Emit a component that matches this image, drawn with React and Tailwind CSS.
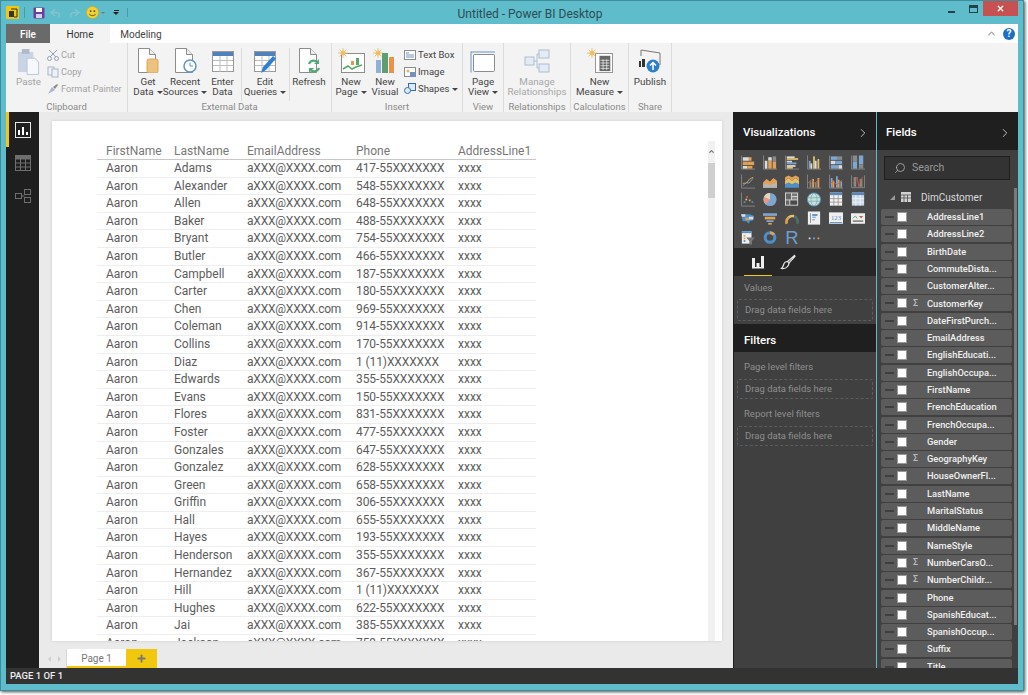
import { ChevronRight, ChevronUp, Plus, Search, X } from "lucide-react";

const lastNames = [
  ["Adams", "417-55XXXXXXX"],
  ["Alexander", "548-55XXXXXXX"],
  ["Allen", "648-55XXXXXXX"],
  ["Baker", "488-55XXXXXXX"],
  ["Bryant", "754-55XXXXXXX"],
  ["Butler", "466-55XXXXXXX"],
  ["Campbell", "187-55XXXXXXX"],
  ["Carter", "180-55XXXXXXX"],
  ["Chen", "969-55XXXXXXX"],
  ["Coleman", "914-55XXXXXXX"],
  ["Collins", "170-55XXXXXXX"],
  ["Diaz", "1 (11)XXXXXXX"],
  ["Edwards", "355-55XXXXXXX"],
  ["Evans", "150-55XXXXXXX"],
  ["Flores", "831-55XXXXXXX"],
  ["Foster", "477-55XXXXXXX"],
  ["Gonzales", "647-55XXXXXXX"],
  ["Gonzalez", "628-55XXXXXXX"],
  ["Green", "658-55XXXXXXX"],
  ["Griffin", "306-55XXXXXXX"],
  ["Hall", "655-55XXXXXXX"],
  ["Hayes", "193-55XXXXXXX"],
  ["Henderson", "355-55XXXXXXX"],
  ["Hernandez", "367-55XXXXXXX"],
  ["Hill", "1 (11)XXXXXXX"],
  ["Hughes", "622-55XXXXXXX"],
  ["Jai", "385-55XXXXXXX"],
  ["Jackson", "759-55XXXXXXX"],
];

const fields = [
  ["AddressLine1"],
  ["AddressLine2"],
  ["BirthDate"],
  ["CommuteDista..."],
  ["CustomerAlter..."],
  ["CustomerKey", true],
  ["DateFirstPurch..."],
  ["EmailAddress"],
  ["EnglishEducati..."],
  ["EnglishOccupa..."],
  ["FirstName"],
  ["FrenchEducation"],
  ["FrenchOccupa..."],
  ["Gender"],
  ["GeographyKey", true],
  ["HouseOwnerFl..."],
  ["LastName"],
  ["MaritalStatus"],
  ["MiddleName"],
  ["NameStyle"],
  ["NumberCarsO...", true],
  ["NumberChildr...", true],
  ["Phone"],
  ["SpanishEducat..."],
  ["SpanishOccup..."],
  ["Suffix"],
  ["Title"],
];

const O = "#e0a156";
const B = "#7fa6cf";
const Y = "#e3c26e";
const W = "#dcdcdc";
const G = "#8a8a8a";
const T = "#4f8fc8";
const R = "#c9634a";

function bars(list) {
  return list.map(([x, y, w, h, c], i) => <rect key={i} x={x} y={y} width={w} height={h} fill={c} />);
}

const Axis = () => <path d="M.5 0v15.500H16" stroke={G} fill="none" />;

// small chart glyphs for the visualization gallery, all on a 16x16 box
const vizIcons = [
  <g key="1">
    <Axis />
    {bars([[2, 2, 7, 4, W], [9, 2, 3, 4, O], [2, 7, 5, 4, O], [7, 7, 8, 4, O], [2, 12, 5, 3, W], [7, 12, 6, 3, O]])}
  </g>,
  <g key="2">
    <Axis />
    {bars([[2, 6, 3, 9, W], [6, 2, 4, 4, W], [6, 6, 4, 9, O], [11, 1, 4, 6, G], [11, 7, 4, 8, O]])}
  </g>,
  <g key="3">
    <Axis />
    {bars([[2, 1, 9, 2, W], [2, 3, 13, 2, Y], [2, 6, 6, 2, W], [2, 8, 11, 2, B], [2, 11, 10, 2, W], [2, 13, 7, 2, Y]])}
  </g>,
  <g key="4">
    <Axis />
    {bars([[2, 6, 2, 9, B], [4, 9, 2, 6, W], [7, 1, 2, 14, Y], [9, 6, 2, 9, W], [12, 4, 2, 11, Y]])}
  </g>,
  <g key="5">
    <Axis />
    {bars([[2, 1, 8, 4, B], [10, 1, 5, 4, G], [2, 6, 5, 4, W], [7, 6, 8, 4, B], [2, 11, 9, 4, B], [11, 11, 4, 4, W]])}
  </g>,
  <g key="6">
    <Axis />
    {bars([[2, 0, 5, 7, G], [2, 7, 5, 8, B], [9, 0, 5, 10, B], [9, 10, 5, 5, G]])}
  </g>,
  <g key="l">
    <Axis />
    <path d="M2 13l4-4 3 1 5-6" stroke={B} fill="none" />
    <path d="M2 10l4 0 4-5 4-2" stroke={O} fill="none" />
  </g>,
  <g key="a">
    <path d="M0 15V9l4-4 4 3 4-4 4 3v8z" fill={O} />
    <path d="M0 15v-3l4-2 4 2 8-3v6z" fill="#b5b5b5" />
  </g>,
  <g key="s">
    <path d="M0 15v-4l4-2 4 2 4-2 4 2v4z" fill={T} />
    <path d="M0 11V7l4-3 4 3 4-3 4 3v4l-4-2-4 2-4-2z" fill={Y} />
    <path d="M0 7V3l4-2 4 2 4-2 4 2v4l-4-3-4 3-4-3z" fill={O} />
  </g>,
  <g key="c1">
    <Axis />
    {bars([[3, 8, 2, 7, G], [6, 5, 2, 10, O], [9, 9, 2, 6, G], [12, 4, 2, 11, O]])}
    <path d="M1 10l4-4 4 4 6-6" stroke={R} fill="none" />
  </g>,
  <g key="c2">
    <Axis />
    {bars([[2, 4, 2, 11, B], [4, 7, 2, 8, O], [8, 2, 2, 13, B], [10, 6, 2, 9, O], [13, 8, 2, 7, B]])}
    <path d="M1 10l4-2 4 4 6-6" stroke={R} fill="none" />
  </g>,
  <g key="c3">
    <path d="M.5 1v14h15V1" stroke={G} fill="none" />
    <rect x="3" y="3" width="3" height="11" fill={G} />
    <rect x="10" y="5" width="3" height="9" fill={G} />
    <path d="M3 10l4-7 2 11 4-11" stroke={R} fill="none" />
  </g>,
  <g key="sc">
    <Axis />
    {bars([[3, 10, 2, 2, T], [6, 4, 2, 2, R], [9, 8, 2, 2, O], [12, 10, 2, 2, T], [5, 7, 2, 2, Y]])}
  </g>,
  <g key="p">
    <circle cx="8" cy="8" r="7.500" fill={B} />
    <path d="M8 8V.5a7.500 7.500 0 0 0-7 5z" fill="#e7d6b4" />
    <path d="M8 8L1 5.500a7.500 7.500 0 0 0 2 8z" fill="#e59a86" />
  </g>,
  <g key="tm">
    <rect width="15" height="15" fill={W} />
    {bars([[1, 1, 6, 7, "#666"], [8, 1, 6, 3, "#777"], [8, 5, 6, 3, "#888"], [1, 9, 4, 5, "#666"], [6, 9, 8, 5, "#4a4a4a"]])}
  </g>,
  <g key="g">
    <circle cx="8" cy="8" r="7.500" fill="#c6dfe6" stroke={T} />
    <path d="M1 6h14M1 10h14" stroke="#86b59f" />
    <ellipse cx="8" cy="8" rx="3.500" ry="7" stroke="#86b59f" fill="none" />
  </g>,
  <g key="t">
    <rect x="1" width="14" height="15" fill="#f2f2f2" />
    <rect x="1" width="14" height="3" fill="#5a86ba" />
    <path d="M1 7h14M1 11h14M5.500 3v12M10.500 3v12" stroke="#9a9a9a" />
  </g>,
  <g key="m">
    <rect x="1" width="14" height="15" fill="#c9d9ea" />
    <rect x="1" width="14" height="3" fill="#5a86ba" />
    <path d="M1 7h14M1 11h14M5.500 3v12M10.500 3v12" stroke="#f2f2f2" />
  </g>,
  <g key="f">
    <path d="M0 3h10l5 2-1 5-4 1-1 3-3-3H2z" fill={T} />
    <path d="M0 3h5v3H1zM9 6h5v3H9z" fill={W} />
    <path d="M5 7h4v3H5z" fill={O} />
  </g>,
  bars([[0, 2, 16, 3, B], [2, 6, 12, 3, O], [4, 10, 8, 2, B], [6, 13, 4, 2, O]]),
  <g key="ga">
    <path d="M2 14a6.500 6.500 0 0 1 2-7" stroke={O} strokeWidth="3" fill="none" />
    <path d="M4 7a6.500 6.500 0 0 1 6.500-1.500" stroke={Y} strokeWidth="3" fill="none" />
    <path d="M10.500 5.500A6.500 6.500 0 0 1 14 14" stroke="#4f6f6f" strokeWidth="3" fill="none" />
  </g>,
  <g key="ca">
    <rect x="1" width="14" height="15" fill="#efefef" />
    <path d="M4 2v11" stroke={G} />
    {bars([[6, 3, 6, 2, T], [6, 6, 4, 1, T], [6, 9, 3, 1, T]])}
  </g>,
  <g key="12">
    <rect y="1" width="16" height="13" fill="#efefef" />
    <text x="8" y="10" textAnchor="middle" fontSize="7.500" fill={T} fontFamily="Liberation Serif, serif">123</text>
    <rect x="1" y="12" width="14" height="1" fill={T} />
  </g>,
  <g key="k">
    <rect y="2" width="16" height="12" fill="#efefef" />
    <path d="M2 8l3-3 2 3" fill="none" stroke="#5aa56a" />
    <path d="M9 5h5l-2.500 3z" fill={R} />
    <rect x="2" y="10" width="12" height="2" fill={G} />
  </g>,
  <g key="sl">
    <rect x="1" y="1" width="11" height="14" fill="#efefef" />
    <rect x="1" y="1" width="11" height="2" fill={T} />
    {bars([[3, 5, 2, 2, O], [3, 8, 2, 2, O], [3, 11, 2, 2, T]])}
    <path d="M6 8h10l-3.500 4v4h-3v-4z" fill="#777" />
  </g>,
  <g key="d">
    <circle cx="8" cy="8" r="5.500" fill="none" stroke={T} strokeWidth="3.500" />
    <path d="M8 2.500a5.500 5.500 0 0 1 4.500 2.300" stroke={O} strokeWidth="3.500" fill="none" />
  </g>,
  <text key="r" x="8" y="15.500" textAnchor="middle" fontSize="21" fill="#6e9fd0" fontFamily="Liberation Sans, sans-serif">R</text>,
  <g key="dots">
    <rect x="2" y="8" width="2" height="2" fill={W} />
    <rect x="7" y="8" width="2" height="2" fill={B} />
    <rect x="12" y="8" width="2" height="2" fill={O} />
  </g>,
];

function PaperIcon({ children }) {
  return (
    <svg viewBox="0 0 24 25" className="h-[25px] w-6">
      <path d="M2.500 .5h11l6 6v18h-17z" fill="#fff" stroke="#8c8c8c" />
      <path d="M13.500 .5v6h6" fill="#eee" stroke="#8c8c8c" />
      {children}
    </svg>
  );
}

function GridIcon({ pen }) {
  return (
    <svg viewBox="0 0 24 22" className="h-[22px] w-6">
      <rect x="1.500" y=".5" width="21" height="20" fill="#fff" stroke="#9a9a9a" />
      <rect x="2" y="1" width="20" height="4" fill="#4f81bd" />
      <path d="M2 9.500h20M2 14.500h20M9 5v16M16 5v16" stroke="#bdbdbd" />
      {pen && <path d="M8 22l2-6 10-11 3 2.500-10 11.500z" fill="#2f7fd1" />}
    </svg>
  );
}

const Caret = () => <span className="ml-[3px] inline-block h-0 w-0 border-x-[3px] border-t-[3px] border-x-transparent border-t-[#444] align-middle" />;

// one large ribbon button: icon above, one or two lines of label
function BigButton({ icon, lines, caret, w, dim }) {
  return (
    <div className={`flex shrink-0 flex-col items-center ${w}`}>
      <div className="flex h-[25px] items-end justify-center">{icon}</div>
      <div className={`mt-[4px] whitespace-nowrap text-center text-[9.800px] leading-[10px] ${dim ? "text-[#a8a8a8]" : "text-[#444]"}`}>
        {lines.map((l, i) => (
          <div key={l}>
            {l}
            {caret && i === lines.length - 1 && <Caret />}
          </div>
        ))}
      </div>
    </div>
  );
}

function RibbonGroup({ label, w, children }) {
  return (
    <div className={`flex h-full shrink-0 flex-col border-r border-[#dcdcdc] ${w}`}>
      <div className="flex min-h-0 flex-1 pt-[5px]">{children}</div>
      <div className="-mb-[1px] text-center text-[9.500px] leading-[12px] text-[#8a8a8a]">{label}</div>
    </div>
  );
}

const Sun = () => (
  <svg viewBox="0 0 10 10" className="absolute left-0 top-0 h-[10px] w-[10px]">
    <circle cx="5" cy="5" r="2.500" fill="#f3c677" />
    <path d="M5 0v10M0 5h10M1.500 1.500l7 7M8.500 1.500l-7 7" stroke="#f0b95c" strokeWidth=".8" />
  </svg>
);

const smallRow = "flex h-[17px] items-center gap-[2px] whitespace-nowrap";

function Ribbon() {
  return (
    <div className="flex h-[69px] shrink-0 bg-[#f3f3f3]">
      <RibbonGroup label="Clipboard" w="w-[122px]">
        <div className="flex pl-[11px]">
          <div className="flex w-[23px] flex-col items-center">
            <svg viewBox="0 0 24 27" className="mt-[1px] h-[26px] w-[23px] shrink-0">
              <rect x="1" y="3" width="16" height="21" fill="#c9d4e4" />
              <rect x="5" y="0" width="8" height="5" fill="#aeb9ca" />
              <path d="M10.500 9.500h8l4 4v13h-12z" fill="#f6f8fc" stroke="#b9c6da" />
            </svg>
            <div className="mt-[2px] text-[9.800px] leading-[10px] text-[#a3a3a3]">Paste</div>
          </div>
          <div className="-mt-[1.500px] ml-[7px] flex flex-col text-[9.200px] text-[#a3a3a3]">
            <div className={smallRow}>
              <svg viewBox="0 0 12 12" className="h-3 w-3" fill="none" stroke="#8fa0b8">
                <path d="M2 1l7 7M10 1L3 8" />
                <circle cx="2.500" cy="9.500" r="2" />
                <circle cx="9.500" cy="9.500" r="2" />
              </svg>
              Cut
            </div>
            <div className={smallRow}>
              <svg viewBox="0 0 12 12" className="h-3 w-3" fill="#eef1f6" stroke="#a9b6c9">
                <rect x="1" y="1" width="6" height="8" />
                <rect x="5" y="3" width="6" height="8" />
              </svg>
              Copy
            </div>
            <div className={smallRow}>
              <svg viewBox="0 0 12 12" className="h-3 w-3">
                <path d="M1 11l4-7 3 3z" fill="#a9b6c9" />
                <path d="M6 4l4-3 1 1-3 4z" fill="#8c8c8c" />
              </svg>
              Format Painter
            </div>
          </div>
        </div>
      </RibbonGroup>
      <RibbonGroup label="External Data" w="w-[204px]">
        <div className="flex pl-[2px]">
          <BigButton
            w="w-[36px]"
            lines={["Get", "Data"]}
            caret
            icon={
              <PaperIcon>
                <rect x="11" y="11" width="11" height="14" rx="2" fill="#edc27c" stroke="#d7a95c" />
              </PaperIcon>
            }
          />
          <BigButton
            w="w-[38px]"
            lines={["Recent", "Sources"]}
            caret
            icon={
              <PaperIcon>
                <circle cx="17" cy="18" r="6" fill="#fff" stroke="#5b93c9" strokeWidth="1.500" />
                <path d="M17 14.500V18h3" stroke="#5b93c9" fill="none" />
              </PaperIcon>
            }
          />
          <div className="w-[38px] border-r border-[#dcdcdc]">
            <BigButton w="w-[37px]" lines={["Enter", "Data"]} icon={<GridIcon />} />
          </div>
          <BigButton w="w-[46px]" lines={["Edit", "Queries"]} caret icon={<GridIcon pen />} />
          <div className="w-[2px] border-r border-[#dcdcdc]" />
          <BigButton
            w="w-[38px]"
            lines={["Refresh"]}
            icon={
              <PaperIcon>
                <path d="M12 16a5 5 0 0 1 9-1M22 20a5 5 0 0 1-9 1" fill="none" stroke="#55a678" strokeWidth="2.200" />
                <path d="M22 11v5h-5zM12 25v-5h5z" fill="#55a678" />
              </PaperIcon>
            }
          />
        </div>
      </RibbonGroup>
      <RibbonGroup label="Insert" w="w-[131px]">
        <div className="flex pl-[2px]">
          <BigButton
            w="w-[34px]"
            lines={["New", "Page"]}
            caret
            icon={
              <div className="relative h-[25px] w-[27px]">
                <svg viewBox="0 0 24 20" className="absolute bottom-0 right-0 h-[20px] w-6">
                  <rect x=".5" y=".5" width="23" height="19" fill="#fff" stroke="#8c8c8c" />
                  <rect x="10" y="8" width="3" height="4" fill="#e8934a" />
                  <rect x="15" y="5" width="3" height="7" fill="#5aa56a" />
                  <path d="M2 16l5-3 4 3 4-2 6-2" fill="none" stroke="#5aa56a" strokeWidth="1.500" />
                </svg>
                <Sun />
              </div>
            }
          />
          <BigButton
            w="w-[34px]"
            lines={["New", "Visual"]}
            icon={
              <div className="relative h-[25px] w-[24px]">
                <div className="absolute bottom-0 left-[3px] flex items-end gap-[1px]">
                  <div className="h-[13px] w-[5px] bg-[#8fb0d4]" />
                  <div className="h-[20px] w-[6px] bg-[#5d9e73]" />
                  <div className="h-[16px] w-[5px] bg-[#e8934a]" />
                </div>
                <Sun />
              </div>
            }
          />
          <div className="-mt-[1.500px] ml-[2px] flex flex-col text-[9.500px] text-[#444]">
            <div className={smallRow}>
              <svg viewBox="0 0 12 12" className="h-3 w-3">
                <rect x=".5" y="1.500" width="11" height="9" fill="#fff" stroke="#8c8c8c" />
                <path d="M2 4h3M2 6h8M2 8h8" stroke="#6c93c4" />
              </svg>
              Text Box
            </div>
            <div className={smallRow}>
              <svg viewBox="0 0 12 12" className="h-3 w-3">
                <rect x=".5" y="1.500" width="11" height="9" fill="#fff" stroke="#8c8c8c" />
                <circle cx="4" cy="5" r="1.500" fill="#e8b35c" />
                <rect x="6" y="6" width="5" height="5" fill="#6c93c4" />
              </svg>
              Image
            </div>
            <div className={smallRow}>
              <svg viewBox="0 0 12 12" className="h-3 w-3" fill="#dfeaf6" stroke="#2f6fb0">
                <rect x="4.500" y=".5" width="7" height="7" />
                <circle cx="3.500" cy="7.500" r="3" />
              </svg>
              <span>
                Shapes
                <Caret />
              </span>
            </div>
          </div>
        </div>
      </RibbonGroup>
      <RibbonGroup label="View" w="w-[41px]">
        <BigButton
          w="w-[40px]"
          lines={["Page", "View"]}
          caret
          icon={
            <svg viewBox="0 0 26 22" className="h-[22px] w-[26px]">
              <path d="M1 .5v21M1 1h24" stroke="#6c93c4" fill="none" />
              <rect x="3.500" y="3.500" width="21" height="17" rx="1" fill="#fff" stroke="#8c8c8c" />
            </svg>
          }
        />
      </RibbonGroup>
      <RibbonGroup label="Relationships" w="w-[67px]">
        <BigButton
          w="w-[66px]"
          dim
          lines={["Manage", "Relationships"]}
          icon={
            <svg viewBox="0 0 26 24" className="h-6 w-[26px]" fill="#e4ebf4" stroke="#aebed3">
              <rect x="1" y="8" width="9" height="8" />
              <rect x="15" y="1" width="10" height="8" />
              <rect x="15" y="15" width="10" height="8" />
              <path d="M10 12h3M13 5v14M13 5h2M13 19h2" fill="none" />
            </svg>
          }
        />
      </RibbonGroup>
      <RibbonGroup label="Calculations" w="w-[58px]">
        <BigButton
          w="w-[57px]"
          lines={["New", "Measure"]}
          caret
          icon={
            <div className="relative h-[25px] w-[26px]">
              <svg viewBox="0 0 20 22" className="absolute bottom-0 right-0 h-[20px] w-[18px]">
                <rect x=".5" y=".5" width="19" height="21" fill="#fff" stroke="#8c8c8c" />
                <rect x="5" y="3" width="12" height="17" fill="#666" />
                <path d="M6 8h10M6 11h10M6 14h10M6 17h10M9 7v12M13 7v12" stroke="#fff" strokeWidth=".7" />
              </svg>
              <Sun />
            </div>
          }
        />
      </RibbonGroup>
      <RibbonGroup label="Share" w="w-[43px]">
        <BigButton
          w="w-[42px]"
          lines={["Publish"]}
          icon={
            <svg viewBox="0 0 24 24" className="h-6 w-6">
              <path d="M3 7V1l19 3v12" fill="none" stroke="#777" />
              <rect x="1" y="12" width="2" height="6" fill="#333" />
              <rect x="4" y="10" width="3" height="8" fill="#333" />
              <circle cx="15" cy="17" r="6.500" fill="#2f7fc8" />
              <path d="M15 21v-7M12 16.500l3-3 3 3" stroke="#fff" strokeWidth="1.500" fill="none" />
            </svg>
          }
        />
      </RibbonGroup>
    </div>
  );
}

function TitleBar() {
  return (
    <div className="flex h-[23px] shrink-0 items-center">
      <div className="flex h-[13px] w-[13px] items-center justify-center rounded-[1px] bg-[#f2c80f]">
        <svg viewBox="0 0 10 10" className="h-[10px] w-[10px]">
          <rect x="1" y="3" width="5" height="6" fill="#333" />
          <path d="M3 1h6v8H6" fill="none" stroke="#333" />
        </svg>
      </div>
      <div className="mx-[5px] h-[11px] w-px bg-[#4b9aa8]" />
      <svg viewBox="0 0 12 12" className="ml-[3px] h-[12px] w-[12px]">
        <rect x=".5" y=".5" width="11" height="11" rx="1" fill="#6b3fa0" />
        <rect x="3" y="1" width="6" height="4" fill="#fff" />
        <rect x="3" y="7" width="6" height="4" fill="#d8d0e8" />
      </svg>
      <svg viewBox="0 0 30 12" className="ml-[5px] h-3 w-[30px]" fill="none" stroke="#84c3cf" strokeWidth="1.500">
        <path d="M5 2L1 5.500 5 9M1 5.500h5c3 0 4 2 3 5" />
        <path d="M25 2l4 3.500L25 9M29 5.500h-5c-3 0-4 2-3 5" />
      </svg>
      <svg viewBox="0 0 14 14" className="ml-[6px] h-[13px] w-[13px]">
        <circle cx="7" cy="7" r="6.500" fill="#f5d130" stroke="#d4a80f" strokeWidth=".6" />
        <circle cx="5" cy="5.500" r="1" fill="#444" />
        <circle cx="9" cy="5.500" r="1" fill="#444" />
        <path d="M3.500 8.500c1.500 2.500 5.500 2.500 7 0" stroke="#444" fill="none" />
      </svg>
      <span className="ml-[2px] h-0 w-0 border-x-[2px] border-t-[2px] border-x-transparent border-t-[#777]" />
      <div className="ml-[8px] flex flex-col items-center gap-[1px]">
        <div className="h-px w-[5px] bg-[#222]" />
        <div className="h-0 w-0 border-x-[3px] border-t-[3px] border-x-transparent border-t-[#222]" />
      </div>
      <div className="ml-[8px] h-[9px] w-px bg-[#4b9aa8]" />
      <div className="flex-1 pr-[16px] pt-[2px] text-center text-[12px] text-[#2b4c52]">Untitled - Power BI Desktop</div>
      <div className="flex h-[15px] items-start self-start">
        <div className="mr-[14px] mt-[10px] h-[2px] w-[7px] bg-[#26404a]" />
        <div className="mr-[5px] mt-[4px] h-[8px] w-[9px] border border-t-[3px] border-[#26404a]" />
        <div className="flex h-[15px] w-[35px] items-center justify-center bg-[#c75050]">
          <X className="h-[9px] w-[9px] text-white" strokeWidth={3.500} />
        </div>
      </div>
    </div>
  );
}

function Tabs() {
  return (
    <div className="flex h-[19px] shrink-0 items-stretch bg-white text-[10px] leading-[21px]">
      <div className="w-[44px] bg-[#6a6a6a] text-center font-medium text-white">File</div>
      <div className="w-[60px] bg-[#f3f3f3] text-center text-[#333]">Home</div>
      <div className="w-[62px] text-center text-[#444]">Modeling</div>
      <div className="flex flex-1 items-center justify-end gap-[6px] pr-[3px]">
        <ChevronUp className="h-[11px] w-[11px] text-[#a8a8a8]" strokeWidth={3} />
        <div className="flex h-[12px] w-[12px] items-center justify-center rounded-full bg-[#1c6fc9] text-[10px] font-bold leading-none text-white">?</div>
      </div>
    </div>
  );
}

function LeftNav() {
  return (
    <div className="flex w-[33px] shrink-0 flex-col items-center bg-[#1f1f1f]">
      <div className="flex h-[35px] w-full items-center justify-center border-l-[3px] border-[#f2c80f] pr-[3px] pt-[1px]">
        <svg viewBox="0 0 16 16" className="h-4 w-4" fill="none">
          <rect x=".5" y=".5" width="15" height="15" stroke="#e8e8e8" />
          <path d="M4 13V8M8 13V5M12 13v-3" stroke="#fff" strokeWidth="2" />
        </svg>
      </div>
      <svg viewBox="0 0 16 16" className="mt-[8px] h-4 w-4" fill="none" stroke="#6e6e6e">
        <rect x=".5" y=".5" width="15" height="15" />
        <rect x="1" y="1" width="14" height="3" fill="#6e6e6e" />
        <path d="M1 8h14M1 12h14M5.500 4v12M10.500 4v12" />
      </svg>
      <svg viewBox="0 0 16 16" className="mt-[17px] h-4 w-4" fill="none" stroke="#6e6e6e">
        <rect x=".5" y="5.500" width="6" height="5" />
        <rect x="9.500" y="1.500" width="6" height="5" />
        <rect x="9.500" y="9.500" width="6" height="5" />
        <path d="M6.500 8h3" />
      </svg>
    </div>
  );
}

const tableCols = "grid grid-cols-[77px_73px_109px_102px_78px] items-center";

function Canvas() {
  return (
    <div className="flex w-[694px] shrink-0 flex-col bg-[#eaeaea]">
      <div className="flex min-h-0 flex-1 pb-[8px] pl-[13px] pr-[11px] pt-[9px]">
        <div className="flex min-w-0 flex-1 overflow-hidden bg-white pl-[45px] pr-[7px] pt-[21px] shadow-[0_0_3px_rgba(0,0,0,0.12)]">
          <div className="w-[439px] shrink-0 text-[12px] text-[#5c5c5c]">
            <div className={`${tableCols} h-[18px] border-b border-[#c8c8c8] leading-[18px] text-[#777]`}>
              <div className="pl-[9px]">FirstName</div>
              <div>LastName</div>
              <div>EmailAddress</div>
              <div>Phone</div>
              <div>AddressLine1</div>
            </div>
            {lastNames.map(([last, phone]) => (
              <div key={last} className={`${tableCols} h-[17.600px] border-b border-[#eeeeee] leading-[17px]`}>
                <div className="pl-[9px]">Aaron</div>
                <div>{last}</div>
                <div className="tracking-[-0.2px]">aXXX@XXXX.com</div>
                <div className="tracking-[-0.1px]">{phone}</div>
                <div>xxxx</div>
              </div>
            ))}
          </div>
          <div className="-mt-[1px] ml-auto flex w-[7px] shrink-0 flex-col items-center bg-[#f1f1f1] pt-[7px]">
            <ChevronUp className="h-[7px] w-[7px] shrink-0 text-[#777]" strokeWidth={4} />
            <div className="mt-[8px] h-[35px] w-[7px] shrink-0 bg-[#cfcfcf]" />
          </div>
        </div>
      </div>
      <div className="flex h-[19px] shrink-0 items-stretch text-[10px]">
        <div className="flex w-[28px] items-center justify-center gap-[7px] border-r border-[#d8d8d8] pl-[3px]">
          <span className="h-0 w-0 border-y-[3px] border-r-[3px] border-y-transparent border-r-[#cfcfcf]" />
          <span className="h-0 w-0 border-y-[3px] border-l-[3px] border-y-transparent border-l-[#cfcfcf]" />
        </div>
        <div className="w-[59px] border-b-2 border-[#f2c80f] bg-white text-center leading-[19px] text-[#777]">Page 1</div>
        <div className="flex w-[31px] items-center justify-center bg-[#f2c80f]">
          <Plus className="h-[11px] w-[11px] text-[#777]" strokeWidth={4} />
        </div>
      </div>
    </div>
  );
}

function PanelHeading({ children, chevron, h }) {
  return (
    <div className={`flex shrink-0 items-center justify-between bg-[#1f1f1f] pl-[9px] pr-[6px] text-[11.500px] font-medium text-white ${h}`}>
      {children}
      {chevron && <ChevronRight className="h-[14px] w-[14px] text-[#cfcfcf]" strokeWidth={1.500} />}
    </div>
  );
}

function DropWell({ className }) {
  return (
    <div className={`mx-[3px] flex items-center rounded-[2px] border border-dashed border-[#5c5c5c] pl-[7px] text-[9.500px] text-[#8f8f8f] ${className}`}>
      Drag data fields here
    </div>
  );
}

function Visualizations() {
  return (
    <div className="flex w-[142px] shrink-0 flex-col bg-[#404040]">
      <PanelHeading chevron h="h-[38px] pt-[3px]">Visualizations</PanelHeading>
      <div className="grid h-[98px] shrink-0 grid-cols-[repeat(6,14px)] content-start gap-x-[8px] gap-y-[3.700px] bg-[#4a4a4a] pl-[7px] pt-[5px]">
        {vizIcons.map((g, i) => (
          <svg key={i} viewBox="0 0 16 16" className="h-[15px] w-[14px]">
            {g}
          </svg>
        ))}
      </div>
      <div className="flex h-[28px] shrink-0 items-center bg-[#262626] pl-[10px]">
        <div className="flex h-full w-[28px] items-center justify-center border-b-[1.500px] border-[#f2c80f]">
          <svg viewBox="0 0 14 14" className="h-[14px] w-[14px]" fill="#f0f0f0">
            <rect x="1" y="3" width="3" height="9" />
            <rect x="5.500" y="8" width="3" height="4" />
            <rect x="10" y="1" width="3" height="11" />
            <rect x="1" y="12" width="12" height="1.500" />
          </svg>
        </div>
        <svg viewBox="0 0 16 16" className="ml-[8px] h-[16px] w-[16px]" fill="none" stroke="#e8e8e8" strokeWidth="1.200">
          <path d="M14.500 1.500l-7 6 1.500 1.500 6-6.500z" />
          <path d="M7.500 7.500C5 7.500 4 9 3.500 11 3 13 1.500 14.500 1.500 14.500s4 .5 6-2C9 11 9 9 9 9" />
        </svg>
      </div>
      <div className="pl-[10px] pt-[5px] text-[9.500px] leading-[13px] text-[#8f8f8f]">Values</div>
      <DropWell className="mt-[5px] h-[22px]" />
      <div className="mt-[3px]">
        <PanelHeading h="h-[28px] pt-[5px]">
          <span className="pl-px">Filters</span>
        </PanelHeading>
      </div>
      <div className="pl-[10px] pt-[8px] text-[9.500px] leading-[13px] text-[#8f8f8f]">Page level filters</div>
      <DropWell className="mt-[6px] h-[20px]" />
      <div className="pl-[10px] pt-[8px] text-[9.500px] leading-[13px] text-[#8f8f8f]">Report level filters</div>
      <DropWell className="mt-[6px] h-[20px]" />
    </div>
  );
}

function Fields() {
  return (
    <div className="ml-px flex w-[141px] shrink-0 flex-col bg-[#404040]">
      <PanelHeading chevron h="h-[38px] pt-[3px]">Fields</PanelHeading>
      <div className="relative min-h-0 flex-1 overflow-hidden pl-[4px]">
        <div className="ml-[3px] mt-[6px] flex h-[24px] w-[126px] items-center gap-[6px] border border-[#1f1f1f] bg-[#333] pl-[9px] text-[10.500px] text-[#999]">
          <Search className="h-[12px] w-[12px] -scale-x-100 text-[#bbb]" strokeWidth={1.500} />
          Search
        </div>
        <div className="flex h-[29px] items-center pl-[9px] pt-[5px] text-[10px] text-[#ddd]">
          <span className="h-0 w-0 border-b-[5px] border-l-[5px] border-b-[#999] border-l-transparent" />
          <svg viewBox="0 0 10 10" className="ml-[6px] h-[10px] w-[10px]" fill="#d0d0d0">
            <rect width="10" height="10" />
            <path d="M0 3h10M0 6h10M3 3v7M6.500 3v7" stroke="#404040" strokeWidth=".7" />
          </svg>
          <span className="ml-[10px]">DimCustomer</span>
        </div>
        <div className="flex w-[131px] flex-col gap-[1.300px]">
          {fields.map(([name, sum]) => (
            <div key={name} className="flex h-[16px] shrink-0 items-center rounded-[2px] bg-[#5c5c5c] pl-[4px] text-[9.300px] font-medium text-[#f0f0f0]">
              <div className="h-[2px] w-[9px] bg-[#3f3f3f]" />
              <div className="ml-[3px] h-[10px] w-[10px] border border-[#999] bg-white" />
              <div className="w-[20px] pl-[6px] text-[9px] text-[#bbb]">{sum ? "Σ" : ""}</div>
              <div className="whitespace-nowrap">{name}</div>
            </div>
          ))}
        </div>
        <div className="absolute right-[1px] top-[38px] h-[437px] w-[3px] bg-[#7a7a7a]" />
      </div>
    </div>
  );
}

export default function App() {
  return (
    <div className="h-[695px] w-[1028px] overflow-hidden bg-white font-['Roboto',sans-serif]">
      <div className="flex h-[691px] w-[1024px] flex-col border border-[#3f8d9b] bg-[#5fbccb] px-[5px] pb-[6px] shadow-[1px_1px_3px_rgba(0,0,0,0.7)]">
        <TitleBar />
        <Tabs />
        <Ribbon />
        <div className="flex min-h-0 flex-1">
          <LeftNav />
          <Canvas />
          <div className="w-px shrink-0 bg-[#1f1f1f]" />
          <Visualizations />
          <Fields />
        </div>
        <div className="flex h-[16px] shrink-0 items-center bg-[#333] pl-[4px] text-[9.500px] font-medium text-[#eee]">PAGE 1 OF 1</div>
      </div>
    </div>
  );
}
